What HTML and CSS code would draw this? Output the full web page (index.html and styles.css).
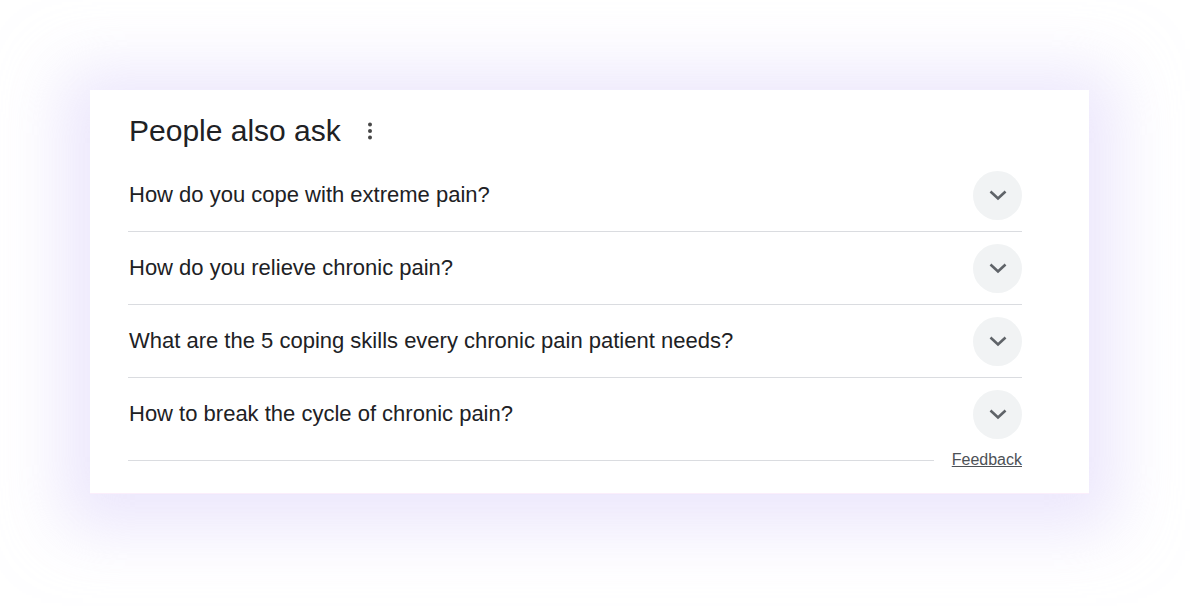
FILE: index.html
```html
<!DOCTYPE html>
<html lang="en">
<head>
    <meta charset="UTF-8">
    <meta name="viewport" content="width=device-width, initial-scale=1.0">
    <title>People also ask</title>
    <link rel="stylesheet" href="styles.css">
</head>
<body>
    <div class="page">
        <div class="card">
            <div class="card-header">
                <h2>People also ask</h2>
                <button class="more-btn" aria-label="More options">
                    <svg width="24" height="24" viewBox="0 0 24 24">
                        <circle cx="12" cy="5.5" r="2"/>
                        <circle cx="12" cy="12" r="2"/>
                        <circle cx="12" cy="18.5" r="2"/>
                    </svg>
                </button>
            </div>

            <div class="questions">
                <div class="question">
                    <span>How do you cope with extreme pain?</span>
                    <button class="expand-btn" aria-label="Expand">
                        <svg width="24" height="24" viewBox="0 0 24 24"><polyline points="4.5,8.5 12,15.5 19.5,8.5"/></svg>
                    </button>
                </div>
                <div class="question">
                    <span>How do you relieve chronic pain?</span>
                    <button class="expand-btn" aria-label="Expand">
                        <svg width="24" height="24" viewBox="0 0 24 24"><polyline points="4.5,8.5 12,15.5 19.5,8.5"/></svg>
                    </button>
                </div>
                <div class="question">
                    <span>What are the 5 coping skills every chronic pain patient needs?</span>
                    <button class="expand-btn" aria-label="Expand">
                        <svg width="24" height="24" viewBox="0 0 24 24"><polyline points="4.5,8.5 12,15.5 19.5,8.5"/></svg>
                    </button>
                </div>
                <div class="question">
                    <span>How to break the cycle of chronic pain?</span>
                    <button class="expand-btn" aria-label="Expand">
                        <svg width="24" height="24" viewBox="0 0 24 24"><polyline points="4.5,8.5 12,15.5 19.5,8.5"/></svg>
                    </button>
                </div>
            </div>

            <div class="card-footer">
                <div class="footer-line"></div>
                <a href="#" class="feedback">Feedback</a>
            </div>
        </div>
    </div>
</body>
</html>
```

FILE: styles.css
```css
* {
    margin: 0;
    padding: 0;
    box-sizing: border-box;
}

body {
    font-family: 'Liberation Sans', Arial, sans-serif;
    background: #fff;
    color: #202124;
    height: 606px;
    overflow: hidden;
}

.page {
    padding: 90px 111px 0 90px;
}

.card {
    background: #fff;
    height: 404px;
    padding: 22px 67px 0 38px;
    box-shadow: 0 8px 60px 28px rgba(220, 212, 250, 0.55);
    border-bottom: 1px solid #fbeefb;
}

.card-header {
    display: flex;
    align-items: center;
    height: 37px;
    margin-bottom: 10px;
}

.card-header h2 {
    font-size: 30px;
    font-weight: 400;
    line-height: 37px;
    color: #202124;
    padding-left: 1px;
}

.more-btn {
    background: none;
    border: none;
    width: 24px;
    height: 24px;
    margin-left: 17px;
    margin-top: 1px;
    fill: #474747;
    display: flex;
}

.question {
    display: flex;
    align-items: center;
    justify-content: space-between;
    height: 73px;
    border-bottom: 1px solid #dadce0;
    font-size: 22px;
    padding-left: 1px;
}

.question:last-child {
    border-bottom: none;
    height: 72px;
}

.expand-btn {
    width: 49px;
    height: 49px;
    border-radius: 50%;
    border: none;
    background: #f1f3f4;
    display: flex;
    align-items: center;
    justify-content: center;
}

.expand-btn svg {
    fill: none;
    stroke: #5f6368;
    stroke-width: 2.6;
}

.card-footer {
    display: flex;
    align-items: center;
    height: 20px;
    gap: 18px;
}

.footer-line {
    flex: 1;
    border-top: 1px solid #dadce0;
    margin-top: 1px;
}

.feedback {
    font-size: 16px;
    color: #4d5156;
    text-decoration: underline;
}
```
